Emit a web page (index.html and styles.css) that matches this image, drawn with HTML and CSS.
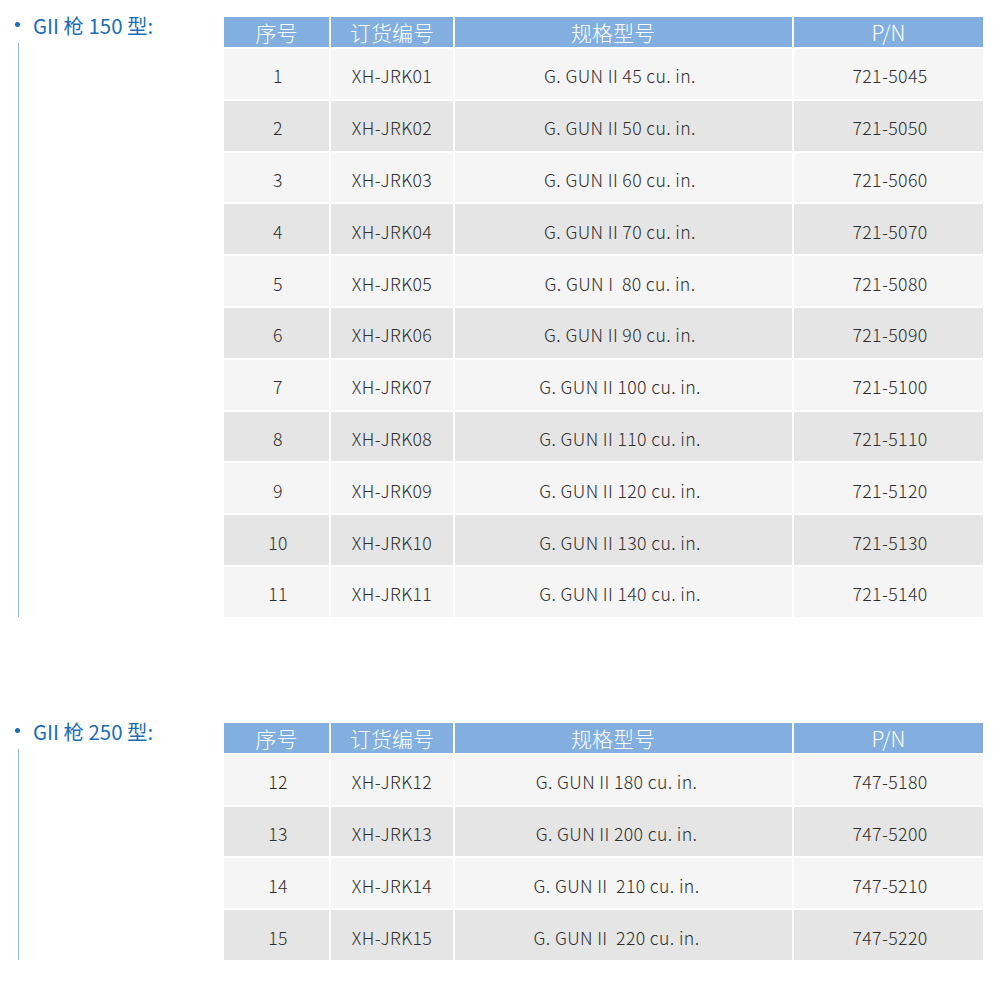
FILE: index.html
```html
<!DOCTYPE html>
<html lang="zh-CN">
<head>
<meta charset="utf-8">
<title>GII 枪</title>
<link rel="stylesheet" href="styles.css">
</head>
<body>
<div class="page">
  <section class="group group-first">
    <div class="side">
      <div class="label"><span class="dot"></span><span class="label-text">GII 枪 150 型:</span></div>
      <div class="rail"></div>
    </div>
    <div class="table">
      <div class="th">序号</div><div class="th">订货编号</div><div class="th spec">规格型号</div><div class="th">P/N</div>
      <div class="td no">1</div><div class="td">XH-JRK01</div><div class="td spec">G. GUN II 45 cu. in.</div><div class="td pn">721-5045</div>
      <div class="td alt no">2</div><div class="td alt">XH-JRK02</div><div class="td alt spec">G. GUN II 50 cu. in.</div><div class="td alt pn">721-5050</div>
      <div class="td no">3</div><div class="td">XH-JRK03</div><div class="td spec">G. GUN II 60 cu. in.</div><div class="td pn">721-5060</div>
      <div class="td alt no">4</div><div class="td alt">XH-JRK04</div><div class="td alt spec">G. GUN II 70 cu. in.</div><div class="td alt pn">721-5070</div>
      <div class="td no">5</div><div class="td">XH-JRK05</div><div class="td spec">G. GUN I&nbsp; 80 cu. in.</div><div class="td pn">721-5080</div>
      <div class="td alt no">6</div><div class="td alt">XH-JRK06</div><div class="td alt spec">G. GUN II 90 cu. in.</div><div class="td alt pn">721-5090</div>
      <div class="td no">7</div><div class="td">XH-JRK07</div><div class="td spec">G. GUN II 100 cu. in.</div><div class="td pn">721-5100</div>
      <div class="td alt no">8</div><div class="td alt">XH-JRK08</div><div class="td alt spec">G. GUN II 110 cu. in.</div><div class="td alt pn">721-5110</div>
      <div class="td no">9</div><div class="td">XH-JRK09</div><div class="td spec">G. GUN II 120 cu. in.</div><div class="td pn">721-5120</div>
      <div class="td alt no">10</div><div class="td alt">XH-JRK10</div><div class="td alt spec">G. GUN II 130 cu. in.</div><div class="td alt pn">721-5130</div>
      <div class="td no">11</div><div class="td">XH-JRK11</div><div class="td spec">G. GUN II 140 cu. in.</div><div class="td pn">721-5140</div>
    </div>
  </section>
  <section class="group group-second">
    <div class="side">
      <div class="label"><span class="dot"></span><span class="label-text">GII 枪 250 型:</span></div>
      <div class="rail"></div>
    </div>
    <div class="table">
      <div class="th">序号</div><div class="th">订货编号</div><div class="th spec">规格型号</div><div class="th">P/N</div>
      <div class="td no">12</div><div class="td">XH-JRK12</div><div class="td spec2">G. GUN II 180 cu. in.</div><div class="td pn">747-5180</div>
      <div class="td alt no">13</div><div class="td alt">XH-JRK13</div><div class="td alt spec2">G. GUN II 200 cu. in.</div><div class="td alt pn">747-5200</div>
      <div class="td no">14</div><div class="td">XH-JRK14</div><div class="td spec2">G. GUN II&nbsp; 210 cu. in.</div><div class="td pn">747-5210</div>
      <div class="td alt no">15</div><div class="td alt">XH-JRK15</div><div class="td alt spec2">G. GUN II&nbsp; 220 cu. in.</div><div class="td alt pn">747-5220</div>
    </div>
  </section>
</div>
</body>
</html>
```
FILE: styles.css
```css
html, body {
  margin: 0;
  padding: 0;
  background: #ffffff;
}
body {
  font-family: "Noto Sans CJK SC", "Noto Sans", sans-serif;
  color: #333333;
}
.page {
  width: 1000px;
  height: 992px;
  box-sizing: border-box;
  padding-top: 12px;
}
.group {
  display: flex;
}
.group-second {
  margin-top: 101px;
}
.side {
  width: 224px;
  flex: none;
  display: flex;
  flex-direction: column;
}
.label {
  display: flex;
  align-items: center;
  height: 26px;
  padding-left: 15px;
  color: #1a6db6;
  font-size: 20.4px;
  line-height: 26px;
}
.dot {
  width: 5px;
  height: 5px;
  border-radius: 50%;
  background: #1a6db6;
  margin-right: 13px;
  margin-top: -1px;
}
.rail {
  flex: 1;
  margin-top: 5px;
  margin-left: 18px;
  border-left: 1px solid #8fb8e3;
}
.table {
  margin-top: 5px;
  display: grid;
  grid-template-columns: 105px 122px 337px 189px;
  grid-auto-rows: 49.8px;
  grid-template-rows: 30px;
  gap: 2px;
  width: 759px;
}
.th {
  background: #82afe0;
  color: #ffffff;
  font-size: 21px;
  font-weight: 300;
  line-height: 30px;
  text-align: center;
}
.th.spec {
  padding-right: 21px;
}
.td {
  background: #f5f5f5;
  font-size: 17.7px;
  font-weight: 300;
  letter-spacing: 0.37px;
  color: #2e2e2e;
  display: flex;
  align-items: center;
  justify-content: center;
  padding-top: 3px;
  box-sizing: border-box;
}
.td.no {
  padding-left: 3px;
}
.td.pn {
  padding-left: 3px;
}
.td.spec {
  padding-right: 7px;
}
.td.spec2 {
  padding-right: 14px;
}
.td.alt {
  background: #e5e5e5;
}
```
